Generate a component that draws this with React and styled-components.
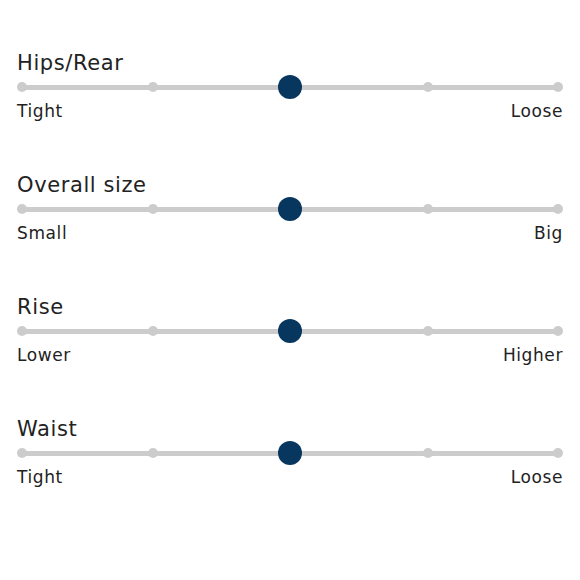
import React, { useState } from "react";
import styled, { createGlobalStyle } from "styled-components";

const sliders = [
  { title: "Hips/Rear", low: "Tight", high: "Loose" },
  { title: "Overall size", low: "Small", high: "Big" },
  { title: "Rise", low: "Lower", high: "Higher" },
  { title: "Waist", low: "Tight", high: "Loose" },
];

const STOPS = [0, 1, 2, 3, 4];

const FitSlider = ({ title, low, high }) => {
  const [value, setValue] = useState(2);
  return (
    <Section>
      <Title>{title}</Title>
      <Track>
        {STOPS.map((s) =>
          s === value ? (
            <Thumb key={s} />
          ) : (
            <Stop key={s} onClick={() => setValue(s)} />
          )
        )}
      </Track>
      <Labels>
        <span>{low}</span>
        <span>{high}</span>
      </Labels>
    </Section>
  );
};

const App = () => {
  return (
    <>
      <GlobalStyle />
      <Page>
        {sliders.map((s) => (
          <FitSlider key={s.title} {...s} />
        ))}
      </Page>
    </>
  );
};

const GlobalStyle = createGlobalStyle`
  body {
    margin: 0;
    background: #fff;
    font-family: "DejaVu Sans", "Open Sans", sans-serif;
    color: #222;
  }
`;

// Page
const Page = styled.div`
  display: flex;
  flex-direction: column;
  gap: 52px;
  padding: 51px 17px 0;
`;

// Section
const Section = styled.div`
  display: flex;
  flex-direction: column;
`;
const Title = styled.div`
  font-size: 21px;
  line-height: 24px;
  letter-spacing: 0.6px;
`;

// Slider
const Track = styled.div`
  position: relative;
  display: flex;
  align-items: center;
  justify-content: space-between;
  height: 24px;

  &::before {
    content: "";
    position: absolute;
    left: 5px;
    right: 5px;
    top: 50%;
    height: 5px;
    margin-top: -2.5px;
    background: #cccccc;
  }
`;
const Stop = styled.span`
  position: relative;
  width: 10px;
  height: 10px;
  border-radius: 50%;
  background: #cccccc;
  cursor: pointer;
`;
const Thumb = styled.span`
  position: relative;
  width: 24px;
  height: 24px;
  border-radius: 50%;
  background: #07375f;
`;

// Labels
const Labels = styled.div`
  display: flex;
  justify-content: space-between;
  margin-top: 2px;
  font-size: 17px;
  line-height: 20px;
  letter-spacing: 0.6px;
`;

export default App;
